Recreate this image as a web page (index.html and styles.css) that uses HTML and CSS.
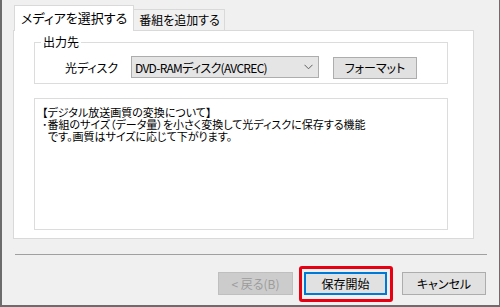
FILE: index.html
```html
<!DOCTYPE html>
<html lang="ja">
<head>
    <meta charset="UTF-8">
    <title>メディアを選択する</title>
    <link rel="stylesheet" href="styles.css">
</head>
<body>
    <div class="window">
        <div class="tabs">
            <div class="tab active">メディアを選択する</div>
            <div class="tab">番組を追加する</div>
        </div>

        <div class="panel">
            <fieldset class="group">
                <legend>出力先</legend>
                <div class="row">
                    <span class="row-label">光ディスク</span>
                    <div class="combo">
                        <span class="combo-text">DVD-RAMディスク(AVCREC)</span>
                        <svg class="chevron" width="9" height="6" viewBox="0 0 9 6">
                            <path d="M0.5 0.8 L4.5 4.8 L8.5 0.8" fill="none" stroke="#5f5f5f" stroke-width="1"/>
                        </svg>
                    </div>
                    <button class="btn btn-format">フォーマット</button>
                </div>
            </fieldset>

            <div class="info-box">
                <p>【デジタル放送画質の変換について】</p>
                <p>･番組のサイズ（データ量）を小さく変換して光ディスクに保存する機能</p>
                <p class="indent">です。画質はサイズに応じて下がります。</p>
            </div>
        </div>

        <div class="separator"></div>

        <div class="buttons">
            <button class="btn btn-back" disabled>&lt;&nbsp;戻る(B)</button>
            <div class="highlight">
                <button class="btn btn-primary">保存開始</button>
            </div>
            <button class="btn btn-cancel">キャンセル</button>
        </div>
    </div>
</body>
</html>
```

FILE: styles.css
```css
* {
    margin: 0;
    padding: 0;
    box-sizing: border-box;
}

body {
    font-family: "Noto Sans CJK JP", "Noto Sans", sans-serif;
    font-size: 12px;
    font-feature-settings: "palt";
    color: #000;
    background: #f0f0f0;
}

.window {
    width: 500px;
    height: 307px;
    background: #f0f0f0;
    border-left: 2px solid #6c6c6c;
    border-right: 1px solid #6c6c6c;
    border-bottom: 2px solid #6c6c6c;
    padding: 5px 13px 0 11px;
}

/* tabs */
.tabs {
    display: flex;
    align-items: flex-end;
    height: 25px;
    margin-left: 1px;
}

.tab {
    height: 21px;
    line-height: 20px;
    padding: 0 4px 0 5px;
    border: 1px solid #d9d9d9;
    border-bottom: none;
    border-left: none;
    background: #f0f0f0;
    font-size: 12px;
}

.tab.active {
    height: 26px;
    line-height: 23px;
    padding: 0 6px;
    border-left: 1px solid #d9d9d9;
    background: #fff;
    font-size: 13px;
    position: relative;
    z-index: 1;
    margin-bottom: -1px;
}

.panel {
    width: 461px;
    height: 209px;
    background: #fff;
    border: 1px solid #d9d9d9;
    padding: 4px 0 0 20px;
}

/* output group */
.group {
    width: 414px;
    height: 49px;
    border: 1px solid #dcdcdc;
}

.group legend {
    margin-left: 6px;
    padding: 0 2px;
    line-height: 14px;
}

.row {
    display: flex;
    align-items: center;
    height: 22px;
    margin: 7px 0 0 30px;
}

.row-label {
    width: 66px;
}

.combo {
    width: 188px;
    height: 22px;
    display: flex;
    align-items: center;
    justify-content: space-between;
    background: #e5e5e5;
    border: 1px solid #adadad;
    padding: 0 4px 0 3px;
}

.combo-text {
    letter-spacing: -0.7px;
}

.chevron {
    margin-right: 1px;
}

.btn {
    font-family: inherit;
    font-size: 12px;
    font-feature-settings: "palt";
    height: 22px;
    background: #e1e1e1;
    border: 1px solid #adadad;
    color: #000;
}

.btn-format {
    width: 84px;
    margin-left: 14px;
    margin-top: 1px;
}

/* description */
.info-box {
    width: 414px;
    height: 132px;
    margin-top: 14px;
    border: 1px solid #dcdcdc;
    padding: 7px 0 0 7px;
    font-size: 11px;
    line-height: 12px;
}

.info-box .indent {
    padding-left: 6px;
}

.separator {
    width: 472px;
    height: 1px;
    margin: 15px 0 0 2px;
    background: #a0a0a0;
}

/* footer buttons */
.buttons {
    display: flex;
    justify-content: flex-end;
    margin-top: 17px;
}

.buttons .btn {
    height: 23px;
}

.btn-back {
    width: 75px;
    background: #cccccc;
    border-color: #bfbfbf;
    color: #9c9c9c;
}

.highlight {
    position: relative;
    margin-left: 11px;
}

.highlight::after {
    content: "";
    position: absolute;
    left: -5px;
    top: -6px;
    right: -6px;
    bottom: -7px;
    border: 3px solid #e60012;
    border-radius: 3px;
}

.btn-primary {
    width: 83px;
    border: 2px solid #0078d7;
}

.btn-cancel {
    width: 84px;
    margin-left: 15px;
}
```
